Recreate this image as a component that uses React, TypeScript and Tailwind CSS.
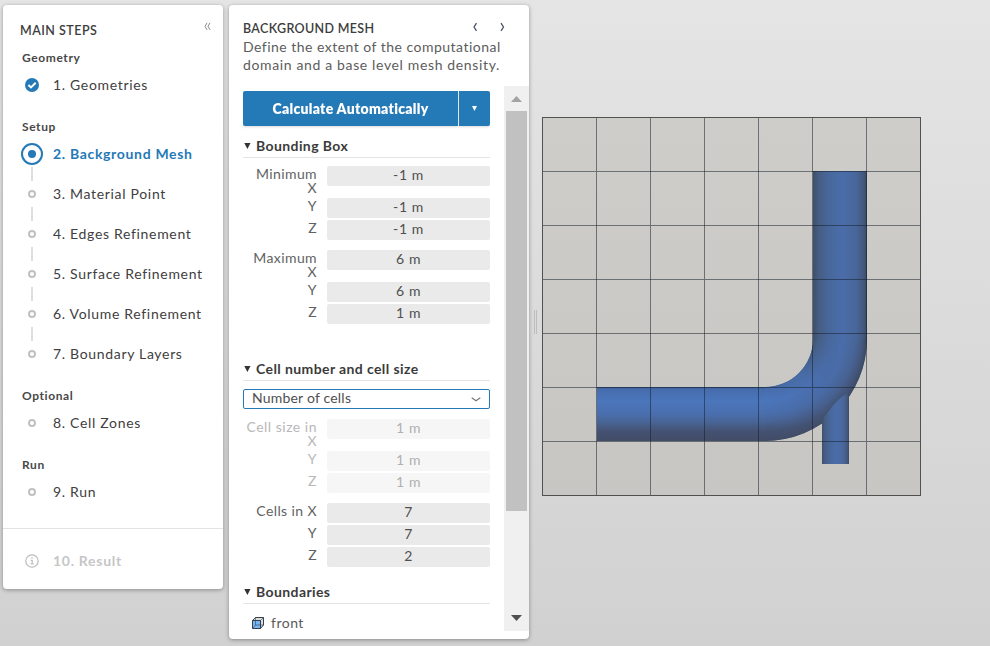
import React from "react";

type Step = { label: string; state?: "done" | "active" };
type Section = { title: string; steps: Step[] };

const sections: Section[] = [
  { title: "Geometry", steps: [{ label: "1. Geometries", state: "done" }] },
  {
    title: "Setup",
    steps: [
      { label: "2. Background Mesh", state: "active" },
      { label: "3. Material Point" },
      { label: "4. Edges Refinement" },
      { label: "5. Surface Refinement" },
      { label: "6. Volume Refinement" },
      { label: "7. Boundary Layers" },
    ],
  },
  { title: "Optional", steps: [{ label: "8. Cell Zones" }] },
  { title: "Run", steps: [{ label: "9. Run" }] },
];

function StepMarker({ state }: { state?: Step["state"] }) {
  if (state === "done") {
    return (
      <svg className="block" width="14" height="14" viewBox="0 0 14 14">
        <circle cx="7" cy="7" r="7" fill="#2479b6" />
        <path d="M3.4 7 6 9.400l4.700-4.600" fill="none" stroke="#fff" strokeWidth="2" />
      </svg>
    );
  }
  if (state === "active") {
    return (
      <span className="flex size-[22px] items-center justify-center rounded-full border-2 border-[#2479b6]">
        <span className="size-2 rounded-full bg-[#2479b6]" />
      </span>
    );
  }
  return <span className="size-2 rounded-full border-2 border-[#c0c0c0]" />;
}

function StepRow({ step, first, last }: { step: Step; first: boolean; last: boolean }) {
  const active = step.state === "active";
  return (
    <div className="flex h-10 items-center">
      <div className="flex h-10 w-[22px] flex-col items-center justify-between">
        <span className={first ? "h-[7px] w-0.5" : "h-[7px] w-0.5 bg-[#dedede]"} />
        <StepMarker state={step.state} />
        <span className={last ? "h-[7px] w-0.5" : "h-[7px] w-0.5 bg-[#dedede]"} />
      </div>
      <span
        className={
          active
            ? "ml-2.5 text-[14px] leading-5 font-bold tracking-[0.68px] text-[#2479b6]"
            : "ml-2.5 text-[14px] leading-5 tracking-[0.68px] text-[#404040]"
        }
      >
        {step.label}
      </span>
    </div>
  );
}

function StepsPanel() {
  return (
    <aside className="mt-[5px] ml-[3px] h-[584px] w-[220px] shrink-0 rounded bg-white shadow-[0_1px_4px_rgba(0,0,0,0.35)]">
      <div className="flex h-[31px] justify-between pt-[17px] pr-3 pl-[17px]">
        <h1 className="mt-px text-[12.5px] leading-4 font-semibold tracking-[0.48px] text-[#3d3d3d]">MAIN STEPS</h1>
        <svg width="7" height="9" viewBox="0 0 7 9" fill="none" stroke="#8b8b8b">
          <path d="M3 .8 1 4.300l2 3.500M6 .8 4 4.300l2 3.500" />
        </svg>
      </div>
      <div className="pl-[18px]">
        {sections.map((section) => (
          <section key={section.title}>
            <h2 className="h-[29px] pt-[15px] pl-px text-[12px] leading-[14px] font-bold tracking-[0.6px] text-[#484848]">
              {section.title}
            </h2>
            {section.steps.map((step, i) => (
              <StepRow key={step.label} step={step} first={i === 0} last={i === section.steps.length - 1} />
            ))}
          </section>
        ))}
      </div>
      <div className="mt-4 flex h-[65px] items-center border-t border-[#e3e3e3] pl-[22px]">
        <svg width="14" height="14" viewBox="0 0 14 14" fill="none" stroke="#bdbdbd">
          <circle cx="7" cy="7" r="6.200" strokeWidth="1.200" />
          <path d="M5.700 6.300H7.200V10M5.500 10h3.200" strokeWidth="1.200" />
          <circle cx="7" cy="4" r="0.800" fill="#bdbdbd" stroke="none" />
        </svg>
        <span className="ml-3.5 text-[14px] leading-5 font-bold tracking-[0.72px] text-[#c6c6c6]">10. Result</span>
      </div>
    </aside>
  );
}

function SectionTitle({ children }: { children: React.ReactNode }) {
  return (
    <div className="flex h-[22px] items-start border-b border-[#e4e4e4] pl-px">
      <svg className="mt-[7px]" width="7" height="6" viewBox="0 0 7 6">
        <path d="M0.300 0h6.200L3.400 6Z" fill="#333" />
      </svg>
      <span className="ml-[5px] text-[14px] leading-5 font-bold tracking-[0.4px] text-[#3b3b3b]">{children}</span>
    </div>
  );
}

type FieldProps = { label: string; value: string; tall?: boolean; disabled?: boolean };

function Field({ label, value, tall, disabled }: FieldProps) {
  return (
    <div className={tall ? "flex h-8" : "flex h-[22px]"}>
      <label
        className={
          disabled
            ? "w-[74px] pt-px text-right text-[14px] leading-[14px] tracking-[0.5px] text-[#b8b8b8]"
            : "w-[74px] pt-px text-right text-[14px] leading-[14px] tracking-[0.4px] text-[#626262]"
        }
      >
        {label}
      </label>
      <div
        className={
          disabled
            ? "ml-2.5 h-5 w-[163px] rounded-xs bg-[#f6f6f6] text-center text-[14px] leading-[18px] tracking-[0.6px] text-[#b0b0b0]"
            : "ml-2.5 h-5 w-[163px] rounded-xs bg-[#eaeaea] text-center text-[14px] leading-[18px] tracking-[0.6px] text-[#505050]"
        }
      >
        {value}
      </div>
    </div>
  );
}

function Settings() {
  return (
    <div className="h-[545px] w-[247px] overflow-hidden pt-[5px]">
      <div className="flex h-[35px] gap-px text-white drop-shadow-[0_1px_1px_rgba(0,0,0,0.15)]">
        <button className="w-[215px] rounded-l-xs bg-[#2479b7] text-[14px] font-extrabold tracking-[0.28px]">
          Calculate Automatically
        </button>
        <button className="flex w-[31px] items-center justify-center rounded-r-xs bg-[#2479b7]">
          <svg width="5" height="5" viewBox="0 0 5 5">
            <path d="M0 0h5L2.500 5Z" fill="#fff" />
          </svg>
        </button>
      </div>
      <div className="mt-2.5">
        <SectionTitle>Bounding Box</SectionTitle>
      </div>
      <div className="mt-2">
        <Field label="Minimum X" value="-1 m" tall />
        <Field label="Y" value="-1 m" />
        <Field label="Z" value="-1 m" />
      </div>
      <div className="mt-2">
        <Field label="Maximum X" value="6 m" tall />
        <Field label="Y" value="6 m" />
        <Field label="Z" value="1 m" />
      </div>
      <div className="mt-[33px]">
        <SectionTitle>Cell number and cell size</SectionTitle>
      </div>
      <div className="mt-2 flex h-5 items-center justify-between rounded-xs border border-[#2479b7] px-2">
        <span className="-mt-0.5 text-[14px] leading-4 tracking-[0.2px] text-[#505050]">Number of cells</span>
        <svg width="10" height="5" viewBox="0 0 10 5" fill="none" stroke="#777" strokeWidth="1.200">
          <path d="M0.700 0.800 5 3.700 9.300 0.800" />
        </svg>
      </div>
      <div className="mt-2.5">
        <Field label="Cell size in X" value="1 m" tall disabled />
        <Field label="Y" value="1 m" disabled />
        <Field label="Z" value="1 m" disabled />
      </div>
      <div className="mt-2">
        <Field label="Cells in X" value="7" />
        <Field label="Y" value="7" />
        <Field label="Z" value="2" />
      </div>
      <div className="mt-[13px]">
        <SectionTitle>Boundaries</SectionTitle>
      </div>
      <div className="mt-[9px] flex h-5 items-center pl-[9px]">
        <svg width="12" height="12" viewBox="0 0 12 12" stroke="#34404e" strokeWidth="1">
          <path d="M3.500.500h8v7.500l-3 3.500v-8h-8Z" fill="#dcdcdc" />
          <path d="M.500 3.500h8v8h-8Z" fill="#78b5f3" />
          <path d="M8.500 3.500l3-3M3.500.500V8h8M3.500 8l-3 3.500" fill="none" strokeWidth=".6" />
        </svg>
        <span className="ml-[7px] text-[14px] leading-5 tracking-[0.5px] text-[#5a5a5a]">front</span>
      </div>
    </div>
  );
}

function ScrollBar() {
  return (
    <div className="flex h-[545px] w-[25px] flex-col items-center bg-[#f0f0f0]">
      <div className="flex h-[25px] items-center">
        <svg width="11" height="6" viewBox="0 0 11 6">
          <path d="M5.500 0 11 6H0Z" fill="#a3a3a3" />
        </svg>
      </div>
      <div className="h-[400px] w-[21px] bg-[#c1c1c1]" />
      <svg className="mt-auto mb-2.5" width="11" height="6" viewBox="0 0 11 6">
        <path d="M0 0h11L5.500 6Z" fill="#505050" />
      </svg>
    </div>
  );
}

function SettingsPanel() {
  return (
    <main className="mt-[5px] ml-1.5 h-[634px] w-[300px] shrink-0 overflow-hidden rounded bg-white shadow-[0_1px_4px_rgba(0,0,0,0.35)]">
      <header className="h-[81px] pt-[15px] pl-3.5">
        <div className="flex h-4 items-center">
          <h1 className="mt-px w-[229px] text-[12.5px] leading-4 font-semibold tracking-[0.34px] whitespace-nowrap text-[#3d3d3d]">
            BACKGROUND MESH
          </h1>
          <svg className="-mt-0.5" width="33" height="10" viewBox="0 0 33 10" fill="none" stroke="#4c5366" strokeWidth="1.300">
            <path d="M4.500 1.200 2 5l2.500 3.800M29 1.200 31.500 5l-2.500 3.800" />
          </svg>
        </div>
        <p className="mt-0.5 text-[14px] leading-[18px] whitespace-nowrap text-[#5c5c5c]">
          <span className="tracking-[0.48px]">Define the extent of the computational</span>
          <br />
          <span className="tracking-[0.64px]">domain and a base level mesh density.</span>
        </p>
      </header>
      <div className="flex justify-between pl-3.5">
        <Settings />
        <ScrollBar />
      </div>
    </main>
  );
}

type Stop = [number, number, number, number];

// Colour across the pipe's section, from the inner side of the bend to the outer one.
const horizontalProfile: Stop[] = [
  [0, 58, 88, 136],
  [0.04, 70, 108, 172],
  [0.27, 75, 118, 188],
  [0.5, 74, 110, 173],
  [0.65, 72, 100, 150],
  [0.78, 69, 86, 121],
  [0.85, 67, 80, 112],
  [1, 66, 76, 102],
];
const verticalProfile: Stop[] = [
  [0, 61, 79, 106],
  [0.1, 69, 93, 130],
  [0.3, 72, 103, 155],
  [0.55, 74, 109, 170],
  [0.8, 72, 102, 153],
  [0.93, 68, 89, 127],
  [1, 58, 74, 100],
];
// The inner side of the bend faces the light, so it keeps its brightness there.
const elbowProfile: Stop[] = [
  [0, 72, 107, 163],
  [0.3, 74, 111, 176],
  [0.55, 73, 108, 168],
  [0.75, 71, 97, 145],
  [0.9, 67, 83, 117],
  [1, 66, 78, 106],
];

function sample(profile: Stop[], t: number): number[] {
  const i = Math.max(1, profile.findIndex((s) => s[0] >= t));
  const a = profile[i - 1];
  const b = profile[i];
  const k = (t - a[0]) / (b[0] - a[0]);
  return [1, 2, 3].map((c) => a[c] + (b[c] - a[c]) * k);
}
const rgb = (c: number[]) => `rgb(${c.map(Math.round).join(",")})`;
const stops = (profile: Stop[]) =>
  profile.map(([at, r, g, b]) => <stop key={at} offset={at} stopColor={rgb([r, g, b])} />);

const rings = Array.from({ length: 54 }, (_, i) => {
  const t = (i + 0.5) / 54;
  return {
    radius: 48.5 + i,
    from: rgb(sample(verticalProfile, t)),
    mid: rgb(sample(elbowProfile, t)),
    to: rgb(sample(horizontalProfile, t)),
  };
});

function MeshView() {
  const cx = 223;
  const cy = 222;
  return (
    <svg className="mt-[117px] ml-[5px] block shrink-0" width="379" height="379" viewBox="0 0 379 379">
      <defs>
        <linearGradient id="plane" x2="0" y2="1">
          <stop stopColor="#cecdc9" />
          <stop offset="1" stopColor="#c7c6c2" />
        </linearGradient>
        <linearGradient id="riser">{stops(verticalProfile)}</linearGradient>
        <linearGradient id="run" x2="0" y2="1">
          {stops(horizontalProfile)}
        </linearGradient>
        <clipPath id="elbow">
          <path d="M325 222A102 102 0 0 1 223 324V270A48 48 0 0 0 271 222Z" />
        </clipPath>
        {rings.map((r, i) => (
          <linearGradient
            key={i}
            id={`ring${i}`}
            gradientUnits="userSpaceOnUse"
            x1={cx + r.radius}
            y1={cy}
            x2={cx}
            y2={cy + r.radius}
          >
            <stop stopColor={r.from} />
            <stop offset=".5" stopColor={r.mid} />
            <stop offset="1" stopColor={r.to} />
          </linearGradient>
        ))}
      </defs>
      <rect width="379" height="379" fill="url(#plane)" />
      <rect x="271" y="54" width="54" height="169" fill="url(#riser)" />
      <rect x="55" y="270" width="169" height="54" fill="url(#run)" />
      <g clipPath="url(#elbow)">
        {rings.map((r, i) => (
          <circle key={i} cx={cx} cy={cy} r={r.radius} fill="none" stroke={`url(#ring${i})`} strokeWidth="3" />
        ))}
      </g>
      <path d="M280 303 286 295Q296 281 307 275V347H280Z" fill="url(#riser)" />
      <g shapeRendering="crispEdges" stroke="#141c28" strokeOpacity=".52">
        {[1, 2, 3, 4, 5, 6].map((n) => (
          <path key={n} d={`M${n * 54 + 0.5} 1V378M1 ${n * 54 + 0.5}H378`} />
        ))}
      </g>
      <rect x=".5" y=".5" width="378" height="378" fill="none" stroke="#515151" shapeRendering="crispEdges" />
    </svg>
  );
}

export default function App() {
  return (
    <div className="flex h-[646px] w-[990px] overflow-hidden bg-linear-to-b from-[#e5e5e5] to-[#d1d1d1] font-[Lato,sans-serif]">
      <StepsPanel />
      <SettingsPanel />
      <div className="mt-[310px] ml-[5px] h-6 w-[3px] shrink-0 border-x border-[#bdbdbd]" />
      <MeshView />
    </div>
  );
}
